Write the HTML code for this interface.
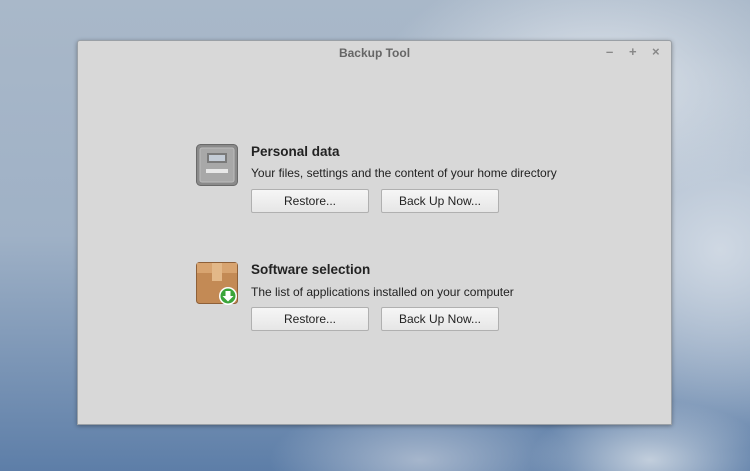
<!DOCTYPE html>
<html><head><style>
html,body{margin:0;padding:0}
body{width:750px;height:471px;overflow:hidden;position:relative;font-family:"Liberation Sans","DejaVu Sans",sans-serif;
background:
radial-gradient(ellipse 220px 120px at 600px 80px,#dde3ea 0%,rgba(220,228,236,0) 100%),
radial-gradient(ellipse 200px 200px at 720px 250px,#cfd8e3 0%,rgba(213,221,231,0) 100%),
radial-gradient(ellipse 150px 60px at 420px 460px,#a6b6cc 0%,rgba(166,182,204,0) 100%),
radial-gradient(ellipse 120px 60px at 650px 460px,#c2cedc 0%,rgba(194,206,220,0) 100%),
linear-gradient(180deg,#a9b8c9 0%,#9fb1c6 50%,#5d7ea8 100%);}
.win{position:absolute;left:77px;top:40px;width:595px;height:385px;background:#d8d8d8;border:1px solid #9aa0a6;border-radius:3px 3px 0 0;box-sizing:border-box;box-shadow:0 1px 4px rgba(0,0,0,.35)}
.title{position:absolute;left:0;right:0;top:5px;text-align:center;font-size:12px;font-weight:bold;color:#666}
.ctl{position:absolute;top:3px;font-size:13px;font-weight:bold;color:#888}
.h{position:absolute;font-size:13.5px;font-weight:bold;color:#222}
.d{position:absolute;font-size:12px;color:#222}
.btn{position:absolute;width:118px;height:24px;box-sizing:border-box;border:1px solid #b0b0b0;border-radius:2px;background:linear-gradient(#f6f6f6,#e6e6e6);font-size:12px;color:#222;text-align:center;line-height:22px}
</style></head><body>
<div class="win">
<div class="title">Backup Tool</div>
<div class="ctl" style="left:528px">–</div>
<div class="ctl" style="left:551px">+</div>
<div class="ctl" style="left:574px">×</div>
</div>
<svg style="position:absolute;left:196px;top:144px" width="42" height="42" viewBox="0 0 42 42">
<rect x="0.5" y="0.5" width="41" height="41" rx="4" fill="#8a8a8a" stroke="#6a6a6a"/>
<rect x="4" y="4" width="34" height="34" rx="2" fill="#a8a8a8" stroke="#bdbdbd"/>
<rect x="11" y="9" width="20" height="10" fill="#7a7a7a"/>
<rect x="13" y="11" width="16" height="6" fill="#c4ccd6"/>
<rect x="10" y="25" width="22" height="4" fill="#e8e8e8"/>
</svg>
<div class="h" style="left:251px;top:144px">Personal data</div>
<div class="d" style="left:251px;top:166px">Your files, settings and the content of your home directory</div>
<div class="btn" style="left:251px;top:189px">Restore...</div>
<div class="btn" style="left:381px;top:189px">Back Up Now...</div>
<svg style="position:absolute;left:196px;top:262px" width="44" height="44" viewBox="0 0 44 44">
<rect x="0.5" y="0.5" width="41" height="41" rx="3" fill="#c38a55" stroke="#8e6038"/>
<rect x="1" y="1" width="40" height="10" fill="#d8a470"/>
<rect x="16" y="1" width="10" height="18" fill="#e3b888"/>
<circle cx="32" cy="34" r="9" fill="#fff"/>
<circle cx="32" cy="34" r="7.5" fill="#3aa53a"/>
<path d="M29.5 29h5v5h3l-5.5 5.5l-5.5-5.5h3z" fill="#fff"/>
</svg>
<div class="h" style="left:251px;top:262px">Software selection</div>
<div class="d" style="left:251px;top:285px">The list of applications installed on your computer</div>
<div class="btn" style="left:251px;top:307px">Restore...</div>
<div class="btn" style="left:381px;top:307px">Back Up Now...</div>
</body></html>
